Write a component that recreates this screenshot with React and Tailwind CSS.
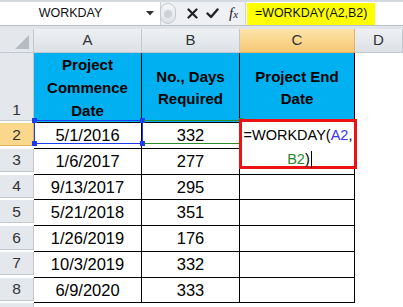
import React from 'react';

// Excel-style sheet: WORKDAY example with formula being edited in C2
const rows = [
  { n: 2, date: '5/1/2016', days: '332' },
  { n: 3, date: '1/6/2017', days: '277' },
  { n: 4, date: '9/13/2017', days: '295' },
  { n: 5, date: '5/21/2018', days: '351' },
  { n: 6, date: '1/26/2019', days: '176' },
  { n: 7, date: '10/3/2019', days: '332' },
  { n: 8, date: '6/9/2020', days: '333' },
];

const rowH = { 2: 'h-[23px]', 3: 'h-[23px]', 4: 'h-[23px]', 5: 'h-[23px]', 6: 'h-[24px]', 7: 'h-[23px]', 8: 'h-[23px]', 9: 'h-[22px]' };

function FormulaBar() {
  return (
    <div className="h-[29px] bg-[#e1e5ea] flex flex-col">
      <div className="h-[25px] flex border-t-[2px] border-[#d5dae0] bg-white">
        <div className="w-[160px] flex items-center bg-white">
          <div className="w-[141px] text-center text-[12.5px] text-[#111]">WORKDAY</div>
          <svg width="8" height="5" viewBox="0 0 8 5" className="ml-[5px]">
            <path d="M0 0 L8 0 L4 4.5 Z" fill="#333" />
          </svg>
        </div>
        <div className="w-[85px] flex items-center bg-[#eef0f3] border-l border-[#cdd2d8]">
          <div className="w-[16px] h-[21px] -ml-[1px] rounded-full border border-[#c4c9cf] bg-gradient-to-b from-[#f6f7f9] to-[#dfe2e6] flex items-center justify-center">
            <div className="w-[8px] h-[8px] rounded-full bg-[#cfd3d8]" />
          </div>
          <svg width="11" height="11" viewBox="0 0 11 11" className="ml-[11px]">
            <path d="M1.5 1.5 L9.5 9.5 M9.5 1.5 L1.5 9.5" stroke="#222" strokeWidth="2.2" strokeLinecap="round" />
          </svg>
          <svg width="13" height="11" viewBox="0 0 13 11" className="ml-[8px]">
            <path d="M1.5 5.5 L5 9 L11.5 1.5" stroke="#222" strokeWidth="2.4" fill="none" strokeLinecap="round" strokeLinejoin="round" />
          </svg>
          <span className="ml-[10px] font-['Liberation_Serif'] italic text-[15px] text-[#222] leading-none">f<span className="text-[11px]">x</span></span>
        </div>
        <div className="flex-1 flex items-center bg-white border-l border-[#cdd2d8] pl-[1px]">
          <span className="bg-[#ffff00] h-[22px] flex items-center px-[8px] text-[12.4px] text-[#111]">=WORKDAY(A2,B2)</span>
        </div>
      </div>
      <div className="flex-1 border-t border-[#b9c0c8]" />
    </div>
  );
}

function ColHead({ label, active }) {
  return (
    <div
      className={
        active
          ? 'h-[24px] flex items-center justify-center text-[15px] text-[#333] bg-gradient-to-b from-[#fce4a8] to-[#f6c874] border-r border-b border-[#e2b35a]'
          : 'h-[24px] flex items-center justify-center text-[15px] text-[#333] bg-gradient-to-b from-[#eef0f3] to-[#dde1e6] border-r border-b border-[#c3c8ce]'
      }
    >
      {label}
    </div>
  );
}

function RowHead({ n, active, h, bottom }) {
  return (
    <div
      className={
        (active
          ? 'bg-[#f9d88e] border-[#e2b35a] '
          : 'bg-[#e4e7eb] border-[#c3c8ce] ') +
        h +
        (bottom ? ' items-end pb-[2px]' : ' items-center') +
        ' flex justify-center text-[15.5px] leading-[17px] text-[#333] border-r border-b'
      }
    >
      {n}
    </div>
  );
}

export default function App() {
  return (
    <div className="w-[403px] h-[307px] overflow-hidden bg-white font-['Liberation_Sans',Arial,sans-serif]">
      <FormulaBar />
      <div className="relative grid grid-cols-[34px_108px_98px_115px_1fr]">
        {/* corner */}
        <div className="h-[24px] bg-[#e4e7eb] border-r border-b border-[#c3c8ce] relative">
          <svg width="34" height="24" viewBox="0 0 34 24" className="absolute inset-0">
            <path d="M15 20 L29 20 L29 6 Z" fill="#b7bcc2" />
          </svg>
        </div>
        <ColHead label="A" />
        <ColHead label="B" />
        <ColHead label="C" active />
        <ColHead label="D" />

        {/* row 1: headings */}
        <RowHead n={1} h="h-[68px]" bottom />
        <div className="bg-[#00b0f0] border-r border-b border-black flex flex-col items-center justify-center font-bold text-[15px] leading-[23px] text-black">
          <span>Project</span>
          <span>Commence</span>
          <span>Date</span>
        </div>
        <div className="bg-[#00b0f0] border-r border-b border-black flex flex-col items-center justify-center font-bold text-[15px] leading-[22px] text-black">
          <span>No., Days</span>
          <span>Required</span>
        </div>
        <div className="bg-[#00b0f0] border-r border-b border-black flex flex-col items-center justify-center font-bold text-[15px] leading-[22px] text-black">
          <span>Project End</span>
          <span>Date</span>
        </div>
        <div />

        {rows.map((r) => (
          <React.Fragment key={r.n}>
            <RowHead n={r.n} active={r.n === 2} h={rowH[r.n]} />
            <div className="border-r border-b border-black flex items-center justify-center text-[16.5px] text-black">{r.date}</div>
            <div className="border-r border-b border-black flex items-center justify-center text-[16.5px] text-black">{r.days}</div>
            <div className="border-r border-b border-black" />
            <div />
          </React.Fragment>
        ))}

        <RowHead n={9} h={rowH[9]} />
        <div />
        <div />
        <div />
        <div />

        {/* A2 selection */}
        <div className="absolute left-[34px] top-[91px] w-[109px] h-[24px] border border-[#1c3cf0]">
          <div className="absolute -left-[3px] -top-[3px] w-[5px] h-[5px] bg-[#1c3cf0]" />
          <div className="absolute -right-[3px] -top-[3px] w-[5px] h-[5px] bg-[#1c3cf0]" />
          <div className="absolute -left-[3px] -bottom-[3px] w-[5px] h-[5px] bg-[#1c3cf0]" />
          <div className="absolute -right-[3px] -bottom-[3px] w-[5px] h-[5px] bg-[#1c3cf0]" />
        </div>
        {/* B2 reference */}
        <div className="absolute left-[144px] top-[91px] w-[96px] h-[24px] border-y border-[#2e8a2e]">
          <div className="absolute -right-[3px] -top-[3px] w-[4px] h-[4px] bg-[#2e8a2e]" />
          <div className="absolute -right-[3px] -bottom-[3px] w-[4px] h-[4px] bg-[#2e8a2e]" />
        </div>
        {/* C2 edit box */}
        <div className="absolute left-[239px] top-[90px] w-[118px] h-[50px] border-[3px] border-[#ee1111] bg-white flex flex-col items-center pt-[1px] text-[14.5px] leading-[24px] text-black">
          <div className="whitespace-nowrap">
            =WORKDAY(<span className="text-[#3535f2]">A2</span>,
          </div>
          <div className="whitespace-nowrap flex items-center pl-[3px]">
            <span className="text-[#2a8a2a]">B2</span>)
            <span className="inline-block w-[1px] h-[17px] bg-black ml-[1px]" />
          </div>
        </div>
      </div>
    </div>
  );
}
